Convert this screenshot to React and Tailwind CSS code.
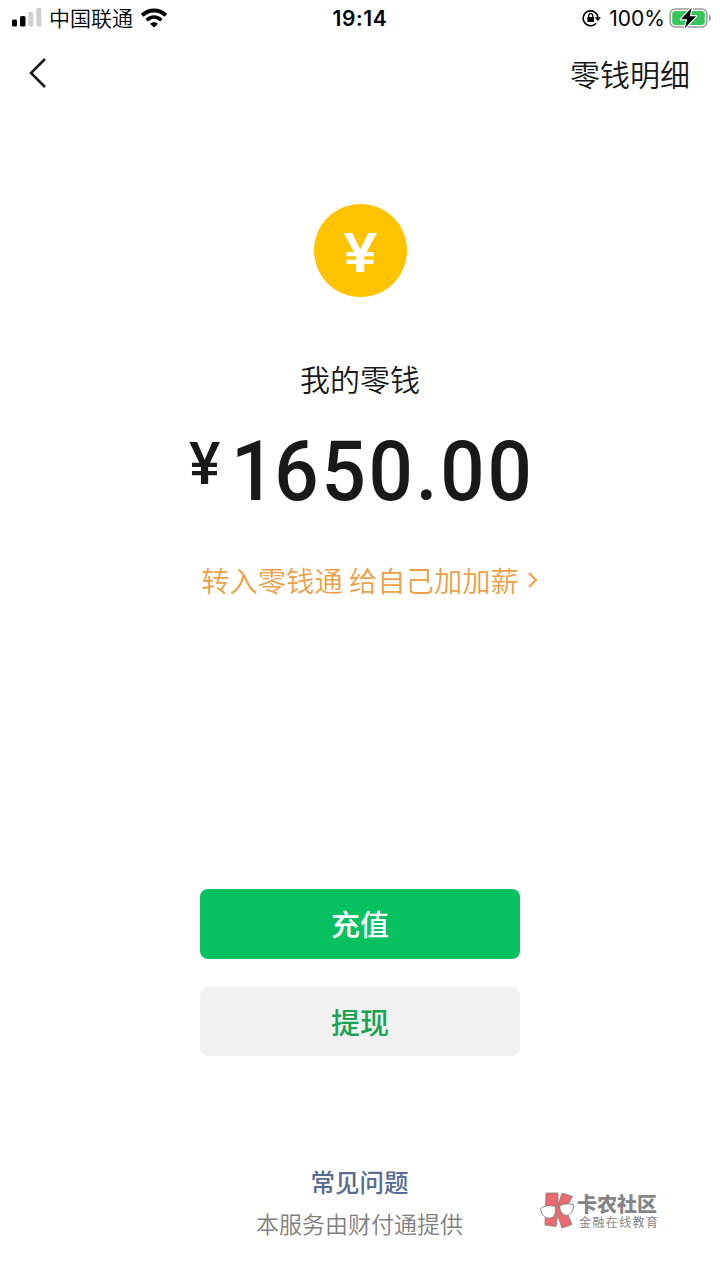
import React from 'react';

const SignalIcon = () => (
  <svg width="30" height="20" viewBox="0 0 30 20" className="shrink-0">
    <rect x="0" y="11.5" width="5" height="7" rx="1.5" fill="#000" />
    <rect x="8" y="8" width="5.5" height="10.5" rx="1.5" fill="#000" />
    <rect x="16.3" y="4" width="5" height="14.5" rx="1.5" fill="#cecece" />
    <rect x="24.3" y="0" width="5" height="18.5" rx="1.5" fill="#cecece" />
  </svg>
);

const WifiIcon = () => (
  <svg width="26" height="20" viewBox="0 0 26 20" fill="none" stroke="#000" className="shrink-0">
    <path d="M1.2 7.4C8 .8 18 .8 24.8 7.4" strokeWidth="4" />
    <path d="M5.7 12.2C10 8 16 8 20.3 12.2" strokeWidth="3.4" />
    <path d="M9 15.7C11.2 13.6 14.8 13.6 17 15.7L13 19.5Z" fill="#000" stroke="none" />
  </svg>
);

const RotationLockIcon = () => (
  <svg width="19" height="18" viewBox="0 0 19 18" fill="none" className="shrink-0">
    <path d="M14.2 14.2A7.4 7.4 0 1 1 16 8.6" stroke="#000" strokeWidth="1.6" />
    <path d="M12.8 8.2H19L15.9 12.3Z" fill="#000" />
    <rect x="5.3" y="8" width="6.8" height="5" rx=".6" fill="#000" />
    <path d="M6.7 8.5V6.7a2 2 0 0 1 4 0V8.5" stroke="#000" strokeWidth="1.3" />
  </svg>
);

const BatteryIcon = () => (
  <svg width="44" height="22" viewBox="0 0 44 22" fill="none" className="shrink-0">
    <rect x="1.1" y="2" width="36.8" height="18" rx="5.2" stroke="#9b9b9b" strokeWidth="1.5" />
    <path d="M40 7.7C42.8 8.8 42.8 13.2 40 14.3Z" fill="#9b9b9b" />
    <rect x="3.2" y="4.1" width="32.6" height="13.8" rx="3.2" fill="#35c759" />
    <path d="M22.7 .8L12 12.3H18.2L15.8 21.3L27 9.3H20.7Z" fill="#000" stroke="#fff" strokeWidth="2.4" paintOrder="stroke" strokeLinejoin="round" />
  </svg>
);

const BrandLogo = () => (
  <svg width="34" height="38" viewBox="0 0 34 38" className="shrink-0">
    <g fill="#ec6770" stroke="#858585" strokeWidth=".9" strokeLinejoin="round">
      <path d="M6 2H18V14L22 2.3L32.5 5.3L25.5 18.5L32 33.5L22 37L17.5 24L16 35.5L5 34Z" />
    </g>
    <g fill="#fff" stroke="#858585" strokeWidth="1">
      <path d="M.6 17.6C3.7 14.7 11 13.8 15.5 15.7C16.3 22.5 14 26.8 9.5 27.2C4.5 27.6 1 23 .6 17.6Z" />
      <path d="M19.7 15.2C23 12.5 30 12.1 33.4 13.9C33.8 20 31 24 26.7 24.4C22.5 24.4 19.8 20.8 19.7 15.2Z" />
      <path d="M15.5 16.3Q17.7 14.6 19.7 16" fill="none" />
    </g>
  </svg>
);

const StatusBar = () => (
  <div className="grid grid-cols-3 h-9 pl-3 pr-[7px] items-center text-black">
    <div className="flex items-center">
      <SignalIcon />
      <span className="ml-[7px] pb-[3px] text-[21px] leading-6 font-[350] whitespace-nowrap">中国联通</span>
      <span className="ml-2">
        <WifiIcon />
      </span>
    </div>
    <div className="pr-[5px] pt-0.5 text-center font-['Inter'] font-semibold text-[21px] leading-6 tracking-[0.6px]">19:14</div>
    <div className="flex items-center justify-end">
      <RotationLockIcon />
      <span className="ml-2 mr-1 pt-0.5 font-['Inter'] text-[21px] leading-6">100%</span>
      <BatteryIcon />
    </div>
  </div>
);

const App = () => {
  return (
    <div className="w-[720px] h-[1280px] overflow-hidden bg-white flex flex-col text-[#191919] font-['Noto_Sans_CJK_SC',sans-serif]">
      <StatusBar />

      {/* Navigation */}
      <div className="flex items-center justify-between h-[76px] pl-7 pr-[30px]">
        <svg width="20" height="32" viewBox="0 0 20 32" fill="none" stroke="#191919" strokeWidth="2.6" className="mb-0.5">
          <path d="M17 2L3 16L17 30" />
        </svg>
        <span className="pb-[3px] text-[30px] leading-10 font-[350]">零钱明细</span>
      </div>

      {/* Balance */}
      <div className="flex flex-col items-center pt-[92px]">
        <div className="size-[93px] rounded-full bg-[#ffc300] flex items-center justify-center">
          <span className="pt-[3px] font-['Inter'] font-semibold text-[54px] leading-[55px] scale-x-115 text-white">¥</span>
        </div>
        <h1 className="mt-[59px] text-[30px] leading-[44px] font-[350]">我的零钱</h1>
        <div className="mt-[22px] w-[342px] flex items-start font-['Roboto'] font-medium">
          <span className="mt-3 text-[59px] leading-[59px]">¥</span>
          <span className="ml-[11px] text-[84px] leading-[100px] tracking-[3px] origin-left scale-x-93">
            <span className="tracking-[-1.3px]">1</span>650.00
          </span>
        </div>
        <a href="#fund" className="mt-[38px] ml-5 flex items-center text-[28.3px] leading-10 font-[350] text-[#eb9f46]">
          <span>转入零钱通 给自己加加薪</span>
          <svg width="12" height="18" viewBox="0 0 12 18" fill="none" stroke="#eb9f46" strokeWidth="2" className="ml-2">
            <path d="M2 2L9 9L2 16" />
          </svg>
        </a>
      </div>

      {/* Actions */}
      <div className="flex flex-col items-center gap-7 mt-[289px] font-medium text-[29px]">
        <button className="w-80 h-[70px] rounded-lg bg-[#07c160] text-white">充值</button>
        <button className="w-80 h-[69px] rounded-lg bg-[#f1f1f1] text-[#17a554]">提现</button>
      </div>

      {/* Footer */}
      <div className="grid grid-cols-[256px_207px_1fr] mt-[108px]">
        <div className="col-start-2 flex flex-col items-center">
          <a href="#faq" className="text-[24.5px] leading-9 font-medium text-[#576b95]">常见问题</a>
          <p className="mt-[5px] text-[23px] leading-9 font-[350] whitespace-nowrap text-[#808080]">本服务由财付通提供</p>
        </div>
        <div className="flex items-start pl-[77px] pt-[27px]">
          <BrandLogo />
          <div className="ml-[3px] pt-px text-[#858585] whitespace-nowrap">
            <div className="text-[20px] leading-[23px] font-black">卡农社区</div>
            <div className="ml-[2px] text-[12px] leading-[14px] tracking-[1.4px]">金融在线教育</div>
          </div>
        </div>
      </div>
    </div>
  );
};

export default App;
